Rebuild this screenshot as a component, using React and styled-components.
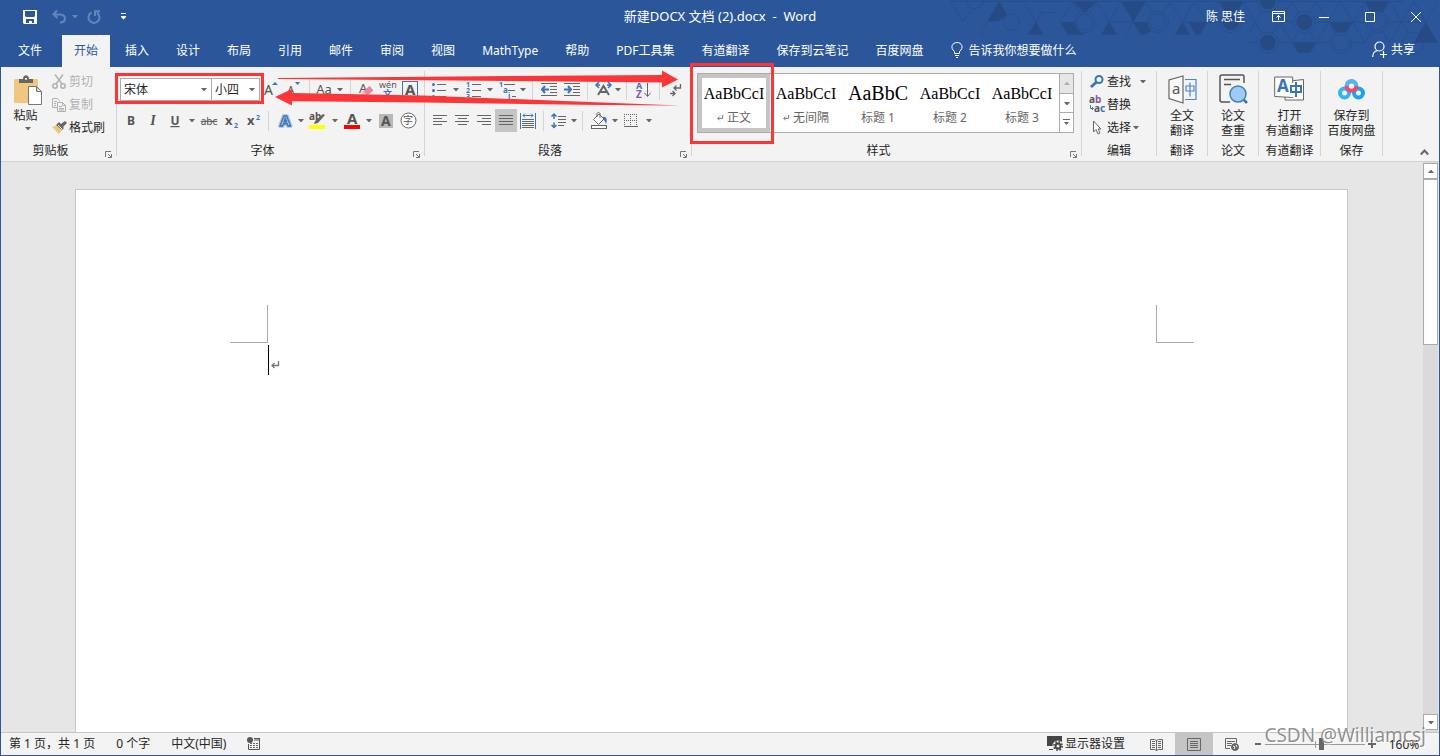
import styled, { createGlobalStyle, css } from 'styled-components';

const BLUE = '#2b579a';
const RED = '#fb3638';
const INK = '#666';
const ACCENT = '#3a76b5';

const GlobalStyle = createGlobalStyle`
  * {
    box-sizing: border-box;
  }

  body {
    margin: 0;
    font-family: 'Noto Sans', 'Noto Sans CJK SC', sans-serif;
    font-size: 12px;
    line-height: 15px;
    color: #262626;
  }

  button,
  input,
  select {
    font: inherit;
    color: inherit;
  }

  button {
    display: flex;
    align-items: center;
    padding: 0;
    border: 0;
    background: none;
  }

  svg {
    display: block;
    flex: none;
    overflow: visible;
  }
`;

/* ---------- window ---------- */

const Window = styled.div`
  display: flex;
  flex-direction: column;
  height: 100vh;
  overflow: hidden;
  border: 1px solid ${BLUE};
  border-top: 0;
`;

const Header = styled.header`
  position: relative;
  flex: none;
  background: ${BLUE};
  color: #fff;
`;

const HeaderArt = styled.svg`
  position: absolute;
  top: 0;
  right: 0;
  overflow: hidden;
`;

const TitleBar = styled.div`
  position: relative;
  display: grid;
  grid-template-columns: 1fr auto 1fr;
  align-items: center;
  height: 35px;
  padding-bottom: 2px;
`;

const DocumentTitle = styled.span`
  font-size: 13px;
`;

const QuickAccess = styled.div`
  display: flex;
  gap: 4px;
  padding-left: 17px;
`;

const SplitTool = styled.div`
  display: flex;
`;

const TitleButton = styled.button`
  justify-content: center;
  width: ${({ $w }) => $w || 24}px;
  height: 32px;
`;

const WindowControls = styled.div`
  display: flex;
  align-items: center;
  justify-content: flex-end;
`;

const UserName = styled.span`
  margin-right: 10px;
`;

const TabBar = styled.nav`
  position: relative;
  display: flex;
  gap: 3px;
  height: 32px;
`;

const Tab = styled.button`
  justify-content: center;
  min-width: ${({ $file }) => ($file ? 58 : 48)}px;
  padding: 0 12px 2px;
  white-space: nowrap;
  ${({ $active }) =>
    $active &&
    css`
      background: #f3f3f3;
      color: ${BLUE};
    `}
`;

const TellMe = styled.button`
  gap: 6px;
  padding: 0 0 2px 12px;
  white-space: nowrap;
`;

const Share = styled.button`
  gap: 4px;
  margin-left: auto;
  padding: 0 24px 4px 0;
`;

/* ---------- ribbon ---------- */

const Ribbon = styled.div`
  position: relative;
  display: flex;
  flex: none;
  height: 95px;
  border-bottom: 1px solid #d2d2d2;
  background: #f3f3f3;
`;

const Group = styled.section`
  display: flex;
  flex-direction: column;
  min-width: ${({ $w }) => $w}px;
`;

const GroupBody = styled.div`
  display: flex;
  flex: none;
  height: 75px;
`;

const GroupFooter = styled.div`
  position: relative;
  height: 18px;
  line-height: 18px;
  text-align: center;
  padding-right: ${({ $launch }) => ($launch ? 16 : 0)}px;
`;

const Launcher = styled.button`
  position: absolute;
  right: 4px;
  bottom: 2px;
`;

const Divider = styled.div`
  width: 1px;
  margin: 4px 0 5px;
  background: #d4d4d4;
`;

const PasteButton = styled.button`
  flex-direction: column;
  width: 50px;
  padding: 8px 0 0 3px;
`;

const PasteLabel = styled.span`
  margin: 2px 0 4px -4px;
`;

const SmallList = styled.div`
  display: flex;
  flex-direction: column;
  padding: 3px 0 0 ${({ $left }) => $left || 0}px;
`;

const SmallButton = styled.button`
  gap: 2px;
  height: 23px;
  color: ${({ disabled }) => (disabled ? '#b1b1b1' : 'inherit')};
  white-space: nowrap;
`;

const IconSlot = styled.span`
  display: flex;
  justify-content: center;
  width: 16px;
`;

const Rows = styled.div`
  display: flex;
  flex-direction: column;
  gap: 8px;
  padding-top: 11px;
`;

const Row = styled.div`
  display: flex;
  align-items: center;
  height: 23px;
  padding-left: ${({ $left }) => $left || 3}px;
`;

const Tool = styled.button`
  justify-content: center;
  width: ${({ $w }) => $w || 22}px;
  height: 23px;
  background: ${({ $on }) => ($on ? '#c5c5c5' : 'none')};
`;

const RowDivider = styled.span`
  width: 1px;
  height: 20px;
  margin: 0 4px;
  background: #d4d4d4;
`;

const Highlight = styled.div`
  position: relative;
  display: flex;

  &::after {
    content: '';
    position: absolute;
    z-index: 3;
    inset: ${({ $inset }) => $inset};
    border: 3px solid ${RED};
    pointer-events: none;
  }
`;

const Combo = styled.label`
  display: flex;
  align-items: center;
  width: ${({ $w }) => $w}px;
  height: 23px;
  margin-right: -1px;
  padding-right: 4px;
  border: 1px solid #ababab;
  background: #fff;

  select {
    appearance: none;
    flex: 1;
    min-width: 0;
    padding: 0 0 0 3px;
    border: 0;
    background: none;
    outline: 0;
  }
`;

const Gallery = styled.div`
  display: flex;
  width: 377px;
  height: 60px;
  margin: 6px 7px 0 5px;
  border: 1px solid #ababab;
  background: #fff;
`;

const StyleCell = styled.button`
  flex-direction: column;
  width: 72px;
  height: 58px;
  border: 4px solid ${({ $on }) => ($on ? '#c5c5c5' : 'transparent')};
`;

const Sample = styled.span`
  height: 27px;
  padding-top: ${({ $large }) => ($large ? 5 : 6)}px;
  font-family: 'Liberation Serif', serif;
  font-size: ${({ $large }) => ($large ? 20 : 16)}px;
  line-height: 20px;
  color: #000;
`;

const StyleName = styled.span`
  display: flex;
  align-items: center;
  gap: 4px;
  margin-top: 5px;
  color: #666;
  white-space: nowrap;
`;

const GalleryNav = styled.div`
  display: flex;
  flex-direction: column;
  flex: 1;
  margin-left: 1px;
  border-left: 1px solid #ababab;
`;

const GalleryButton = styled.button`
  flex: 1;
  justify-content: center;
  background: ${({ disabled }) => (disabled ? '#e6e6e6' : '#fff')};

  & + & {
    border-top: 1px solid #ababab;
  }
`;

const LargeButton = styled.button`
  flex: 1;
  flex-direction: column;
  padding-top: 6px;
  white-space: nowrap;
`;

const LargeIcon = styled.span`
  display: flex;
  align-items: center;
  height: 35px;
  padding-bottom: 3px;
`;

const Collapse = styled.button`
  align-self: flex-end;
  margin: 0 10px 5px auto;
`;

const Arrows = styled.svg`
  position: absolute;
  z-index: 2;
  top: 0;
  left: 273px;
  pointer-events: none;
`;

/* ---------- document ---------- */

const Workspace = styled.main`
  display: flex;
  flex: 1;
  min-height: 0;
  padding-right: 1px;
  background: #e6e6e6;
`;

const Canvas = styled.div`
  display: flex;
  flex: 1;
  justify-content: center;
  padding: 27px 1px 0 0;
`;

const Page = styled.article`
  width: 100%;
  max-width: 1273px;
  padding: 115px 153px 0 154px;
  border: 1px solid #c6c6c6;
  border-bottom: 0;
  background: #fff;
`;

const MarginMarks = styled.div`
  display: flex;
  justify-content: space-between;
`;

const MarginMark = styled.span`
  width: 38px;
  height: 38px;
  border-bottom: 1px solid #ababab;
  border-${({ $side }) => $side}: 1px solid #ababab;
`;

const TextLine = styled.div`
  display: flex;
  align-items: flex-end;
  gap: 2px;
  height: 30px;
  margin: 2px 38px 0;
`;

const TextCursor = styled.span`
  width: 1px;
  height: 30px;
  background: #000;
`;

const ParagraphEnd = styled.span`
  padding-bottom: 6px;
`;

const ScrollBar = styled.div`
  display: flex;
  flex-direction: column;
  width: 15px;
  padding: 1px 0 2px;
  background: #dadada;
`;

const ScrollButton = styled.button`
  justify-content: center;
  height: 16px;
  border: 1px solid #ababab;
  background: #fff;
`;

const ScrollTrack = styled.div`
  flex: 1;
`;

const ScrollThumb = styled.div`
  height: 31%;
  border: 1px solid #ababab;
  background: #fff;
`;

/* ---------- status bar ---------- */

const StatusBar = styled.footer`
  position: relative;
  display: flex;
  align-items: center;
  justify-content: space-between;
  flex: none;
  height: 23px;
  border-top: 1px solid #c6c6c6;
  background: #f3f3f3;
  white-space: nowrap;
`;

const StatusLeft = styled.div`
  display: flex;
  align-items: center;
  gap: 21px;
  padding: 0 0 2px 8px;
`;

const StatusRight = styled.div`
  display: flex;
  align-items: center;
  height: 22px;
`;

const DisplaySettings = styled.button`
  gap: 2px;
  padding: 0 12px 2px 0;
`;

const ViewButton = styled.button`
  justify-content: center;
  width: 38px;
  height: 22px;
  background: ${({ $on }) => ($on ? '#c5c5c5' : 'none')};
`;

const ZoomStep = styled.button`
  justify-content: center;
  width: 14px;
  height: 22px;
`;

const ZoomSlider = styled.input`
  appearance: none;
  width: 100px;
  height: 13px;
  margin: 0;
  background:
    linear-gradient(#999, #999) 50% 50% / 1px 7px no-repeat,
    linear-gradient(#999, #999) 0 50% / 100% 1px no-repeat;

  &::-webkit-slider-thumb {
    appearance: none;
    width: 5px;
    height: 12px;
    background: #666;
  }
`;

const ZoomValue = styled.button`
  justify-content: center;
  width: 60px;
  padding-right: 10px;
`;

const Watermark = styled.span`
  position: absolute;
  right: 13px;
  bottom: 8px;
  font-size: 19px;
  line-height: 24px;
  color: rgba(110, 110, 110, 0.75);
  text-shadow: 1px 1px 0 #fff;
  pointer-events: none;
`;

/* ---------- drawings ---------- */

const Svg = ({ w, h, children, ...rest }) => (
  <svg
    width={w}
    height={h}
    viewBox={`0 0 ${w} ${h}`}
    fill="none"
    stroke={INK}
    aria-hidden="true"
    {...rest}
  >
    {children}
  </svg>
);

const Triangle = ({ up, fill = INK }) => (
  <Svg w={6} h={3} stroke="none" fill={fill}>
    <path d={up ? 'M0 3h6L3.500 0h-1z' : 'M0 0h6L3.500 3h-1z'} />
  </Svg>
);

const Caret = ({ label, w = 12 }) => (
  <Tool $w={w} aria-label={label}>
    <Triangle />
  </Tool>
);

const Glyph = ({ x, y, size, fill = '#555', children, ...rest }) => (
  <text x={x} y={y} fontSize={size} fill={fill} stroke="none" {...rest}>
    {children}
  </text>
);

const ringCentres = [
  [687, 66], [905, 66], [1016, 4], [1126, 66], [1016, 128], [1235, 128], [1345, 66],
];

const HeaderPattern = () => (
  <HeaderArt width="510" height="68" viewBox="0 0 1530 204" aria-hidden="true">
    <g fill="#264a84">
      <path d="M211 4L234 44L210 62L175 66z" />
      <path d="M321 66L343 104H297z" />
      <path d="M431 4h73l-37 34z" />
      <path d="M394 66h42l12 24l18 14h-48z" />
      <path d="M577 4h73l-37 62z" />
      <path d="M540 66l23 38h-46z" />
      <path d="M613 66h42l12 26l-20 12h-12z" />
      <path d="M760 66l22 38h-44z" />
      <path d="M780 66h53l-20 38h-14z" />
      <path d="M870 4h73l-20 32h-34z" />
      <path d="M1199 66h73l-24 32h-26z" />
      <path d="M1089 128h73l-18 30h-36z" />
      <path d="M1308 4h73l-20 32h-34z" />
      <path d="M1491 66l36 62h-73z" />
    </g>
    <g fill="none" stroke="#264f8d" strokeWidth="3">
      <path d="M65 4H1425M540 66h73M760 66h113M1052 66h42M1158 66h155M1377 66h114M960 128h240M1267 128h40" />
      <path d="M65 4L102 66L124 32M211 4L155 98l4 6h12M211 4l23 40M284 4l37 62M297 104l24 -38l20 -34M325 32l14 6h38l14 -10M394 66l37 -62M394 66l24 38M431 4l20 34M504 4l-20 34M504 4l36 62M563 104l-23 -38M517 104l23 -38l37 -62M577 4l36 62l-20 38M613 66l37 -62l22 36M635 104l-22 -38M723 4l-20 34M723 4l37 62M796 4l-58 100M760 66l22 38M796 4l37 62l-20 38M833 66l37 -62l20 34M943 4l-20 34M943 4l35 62l-18 34" />
      <path d="M978 66l22 -34M1030 32l22 34M1089 4l-37 62M1089 4l20 34M1162 4l-20 34M1162 4l37 62M1235 4l-36 62M1235 4l37 62M1308 4l-36 62M1308 4l20 34M1381 4l-20 34M1381 4l37 62M1454 4l-36 62M1454 4l37 62M1527 4l-36 62" />
      <path d="M978 66l22 34M1030 98l22 -32l37 62M1089 128l20 -34M1142 94l20 34l37 -62l20 34M1251 98l21 -32l36 62l20 -34M1361 94l20 34l37 -62l20 34M1470 98l21 -32" />
      <path d="M1089 128l19 30h36l18 -30" />
      <circle cx="138" cy="2" r="24" />
      <circle cx="248" cy="66" r="24" />
      <circle cx="467" cy="66" r="24" />
      <circle cx="467" cy="66" r="32" />
      <circle cx="1454" cy="128" r="32" />
      {ringCentres.map(([cx, cy]) => (
        <circle key={`${cx}-${cy}`} cx={cx} cy={cy} r="32" fill={BLUE} />
      ))}
      <circle cx="687" cy="66" r="24" />
      <circle cx="1235" cy="128" r="24" />
      <circle cx="1345" cy="66" r="24" />
    </g>
    <g fill="#264a84">
      <circle cx="905" cy="66" r="24" />
      <circle cx="1016" cy="4" r="24" />
      <circle cx="1126" cy="66" r="24" />
      <circle cx="1016" cy="128" r="24" />
    </g>
  </HeaderArt>
);

const SaveIcon = () => (
  <Svg w={14} h={14} stroke="none" fill="#fff">
    <path
      fillRule="evenodd"
      d="M0 0h14v14H1l-1-1zM2 1h10v5l-1 1H3L2 6zM3 9h8v4H9v-2H6v2H3z"
    />
  </Svg>
);

const UndoIcon = () => (
  <Svg w={14} h={14} stroke="#6485ba" strokeWidth="2">
    <path d="M5 .5L1.500 4.500L5.500 8M2 4.500h6.500c6 0 6 8-.5 8" />
  </Svg>
);

const RedoIcon = () => (
  <Svg w={14} h={14} stroke="#6485ba" strokeWidth="2">
    <path d="M4.500 2.500A5.500 5.500 0 1 0 10 2.800M8 6V1.200h5" />
  </Svg>
);

const CustomizeIcon = () => (
  <Svg w={7} h={7} stroke="none" fill="#fff">
    <path d="M1 0h5v1H1zM1 3h5v1L3.500 6.500L1 4z" />
  </Svg>
);

const BulbIcon = () => (
  <Svg w={12} h={17} stroke="#fff">
    <path d="M3.500 11.500V9.500C-1.500 5.500 1.500.5 6 .5s7.500 5 2.500 9v2zM4 13.500h4M5 15.500h2" />
  </Svg>
);

const ShareIcon = () => (
  <Svg w={15} h={17} stroke="#fff" strokeWidth="1.200">
    <circle cx="7.500" cy="5.500" r="4.500" />
    <path d="M.7 16c0-4 2-6 5-6.500M8 13.500h7M11.500 10v7" />
  </Svg>
);

const ScissorsIcon = () => (
  <Svg w={14} h={15} stroke="#b1b1b1" strokeWidth="1.500">
    <path d="M3 .5L10 10M11 .5L4 10" />
    <circle cx="3" cy="12" r="2.200" />
    <circle cx="11" cy="12" r="2.200" />
  </Svg>
);

const CopyIcon = () => (
  <Svg w={14} h={14} stroke="#b1b1b1">
    <path d="M5.500 9.500h-5v-9h5l2 2v1M2 3.500h3M2 5.500h2M2 7.500h2" />
    <path fill="#f3f3f3" d="M5.500 4.500h5l3 3v6h-8zM10.500 4.500v3h3M7 8.500h3M7 10.500h5M7 12h5" />
  </Svg>
);

const BrushIcon = () => (
  <Svg w={15} h={13} stroke="none">
    <path fill="#f0c67a" d="M0 6l5-2l5 5l-3 4z" />
    <path fill="#666" d="M4 4l3-3l2 2l4-3l2 2l-4 4l1 1l-2 2z" />
    <path stroke="#f3f3f3" d="M6 4l4 4" />
  </Svg>
);

const ClipboardIcon = () => (
  <Svg w={28} h={31} stroke="none">
    <rect y="4" width="24" height="24" rx="1" fill="#efc77f" />
    <path fill="#666" d="M5 8V4h4c0-5 6-5 6 0h4v4zM11 3v2h2V3z" fillRule="evenodd" />
    <path fill="#fff" stroke="#777" d="M14.500 11.500h8l5 5v13h-13zM22.500 11.500v5h5" />
  </Svg>
);

const LaunchIcon = () => (
  <Svg w={7} h={7} stroke="#777">
    <path d="M.5 6V.5H6M3 3l3 3M6.500 3v3.500H3" />
  </Svg>
);

const SizeIcon = ({ up }) => (
  <Svg w={14} h={18} stroke="none">
    <Glyph x={0} y={14} size={up ? 14 : 12}>A</Glyph>
    <path fill={ACCENT} d={up ? 'M8 4h6l-3-3z' : 'M8 1h5l-2.500 3z'} />
  </Svg>
);

const EraserIcon = () => (
  <Svg w={16} h={18}>
    <Glyph x={1} y={12} size={13}>A</Glyph>
    <g transform="rotate(-40 9 11)" stroke="none">
      <rect x="4" y="8" width="11" height="6" rx="1" fill="#e98998" />
      <rect x="4" y="8" width="3" height="6" rx="1" fill="#f4c0c8" />
    </g>
  </Svg>
);

const PhoneticIcon = () => (
  <Svg w={18} h={19}>
    <Glyph x={0} y={8} size={9}>wén</Glyph>
    <Glyph x={4} y={17} size={9} fill={ACCENT} fontWeight="bold">文</Glyph>
  </Svg>
);

const BoxedAIcon = () => (
  <Svg w={16} h={17} stroke={ACCENT}>
    <rect x=".5" y=".5" width="15" height="16" />
    <Glyph x={3} y={14} size={15} fontWeight="bold">A</Glyph>
  </Svg>
);

const ShadedAIcon = () => (
  <Svg w={14} h={14}>
    <rect width="14" height="14" fill="#b8b8b8" stroke="none" />
    <Glyph x={2} y={12} size={14} fontWeight="bold">A</Glyph>
  </Svg>
);

const CircledIcon = () => (
  <Svg w={17} h={17}>
    <circle cx="8.500" cy="8.500" r="7.500" fill="#fff" />
    <Glyph x={3} y={12} size={10}>字</Glyph>
  </Svg>
);

const LetterIcon = ({ children, ...rest }) => (
  <Svg w={18} h={18}>
    <Glyph x={9} y={13} size={12} textAnchor="middle" {...rest}>
      {children}
    </Glyph>
  </Svg>
);

const ScriptIcon = ({ up }) => (
  <Svg w={14} h={18}>
    <Glyph x={0} y={13} size={13} fontWeight="bold">x</Glyph>
    <Glyph x={9} y={up ? 8 : 16} size={7} fill={ACCENT} fontWeight="bold">2</Glyph>
  </Svg>
);

const EffectsIcon = () => (
  <Svg w={14} h={18}>
    <text x="2" y="14" fontSize="15" fontWeight="bold" stroke="#b4cce8" strokeWidth="4" strokeLinejoin="round" fill="none">A</text>
    <text x="2" y="14" fontSize="15" fontWeight="bold" stroke={ACCENT} strokeWidth="1.500" fill="#fff">A</text>
  </Svg>
);

const MarkerIcon = () => (
  <Svg w={17} h={18} stroke="none">
    <Glyph x={0} y={8} size={10} fontWeight="bold">ab</Glyph>
    <path fill="#666" d="M14 2l2 1l-7 8l-4 1l1-3z" />
    <rect y="13" width="16" height="4" fill="#ffff00" />
  </Svg>
);

const FontColorIcon = () => (
  <Svg w={16} h={18} stroke="none">
    <Glyph x={3} y={12} size={15} fontWeight="bold">A</Glyph>
    <rect y="13" width="16" height="4" fill="#ff0000" />
  </Svg>
);

const BulletsIcon = () => (
  <Svg w={14} h={16}>
    <path d="M5 2.500h9M5 8.500h9M5 14.500h9" />
    <g fill={ACCENT} stroke="none">
      <circle cx="1.500" cy="2.500" r="1.500" />
      <circle cx="1.500" cy="8.500" r="1.500" />
      <circle cx="1.500" cy="14.500" r="1.500" />
    </g>
  </Svg>
);

const NumbersIcon = () => (
  <Svg w={15} h={18}>
    <path d="M6 3.500h9M6 9.500h9M6 15.500h9" />
    <Glyph x={0} y={6} size={7} fill={ACCENT} fontWeight="bold">1</Glyph>
    <Glyph x={0} y={12} size={7} fill={ACCENT} fontWeight="bold">2</Glyph>
    <Glyph x={0} y={18} size={7} fill={ACCENT} fontWeight="bold">3</Glyph>
  </Svg>
);

const MultiLevelIcon = () => (
  <Svg w={17} h={18}>
    <path d="M5 3.500h11M9 9.500h7M13 15.500h4" />
    <Glyph x={0} y={6} size={7} fill={ACCENT} fontWeight="bold">1</Glyph>
    <Glyph x={4} y={12} size={8} fill={ACCENT} fontWeight="bold">a</Glyph>
    <Glyph x={9} y={18} size={8} fill={ACCENT} fontWeight="bold">i</Glyph>
  </Svg>
);

const IndentIcon = ({ out }) => (
  <Svg w={16} h={13}>
    <path d="M0 .5h16M9 3.500h7M9 6.500h7M9 9.500h7M0 12.500h16" />
    <path stroke={ACCENT} strokeWidth="2" d={out ? 'M8 6.500H1M4 3L1 6.500L4 10' : 'M0 6.500h7M4 3l3 3.500L4 10'} />
  </Svg>
);

const AsianLayoutIcon = () => (
  <Svg w={17} h={17} strokeWidth="2">
    <path d="M3 14L8.500 5L14 14M5 11h7" />
    <path stroke={ACCENT} strokeWidth="1.500" d="M4 1L1 4l3 3M1 4h4M13 1l3 3l-3 3M16 4h-4" />
  </Svg>
);

const SortIcon = () => (
  <Svg w={15} h={18}>
    <Glyph x={0} y={8} size={9} fill={ACCENT} fontWeight="bold">A</Glyph>
    <Glyph x={0} y={17} size={10} fill="#8a56b0" fontWeight="bold">Z</Glyph>
    <path d="M11.500 2v13M8.500 12l3 3.500l3-3.500" />
  </Svg>
);

const MarksIcon = () => (
  <Svg w={12} h={14} strokeWidth="1.300">
    <path d="M10.500 1v4H4M6.500 2.500L4 5l2.500 2.500M0 10.500h5M2.500 8L5 10.500L2.500 13" />
  </Svg>
);

const alignPaths = {
  left: 'M0 .5h14M0 3.500h9M0 6.500h14M0 9.500h9',
  center: 'M0 .5h14M3 3.500h9M0 6.500h14M3 9.500h9',
  right: 'M0 .5h14M5 3.500h9M0 6.500h14M5 9.500h9',
  justify: 'M0 .5h14M0 3.500h14M0 6.500h14M0 9.500h14',
};

const AlignIcon = ({ kind }) => (
  <Svg w={14} h={11}>
    <path d={alignPaths[kind]} />
  </Svg>
);

const DistributeIcon = () => (
  <Svg w={16} h={16}>
    <path d="M2 6.500h12M2 8.500h12M2 10.500h12M2 12.500h12M2 14.500h12" />
    <path stroke={ACCENT} d="M.5 0v16M15.500 0v16M3 2.500h10M5 .5l-2 2l2 2M11 .5l2 2l-2 2" />
  </Svg>
);

const SpacingIcon = () => (
  <Svg w={16} h={16}>
    <path d="M7 3.500h8M7 6.500h8M7 9.500h8M7 12.500h6" />
    <path stroke={ACCENT} strokeWidth="1.500" d="M3 1v5M.5 3.500L3 1l2.500 2.500M3 9.500v5M.5 12L3 14.500L5.500 12" />
  </Svg>
);

const BucketIcon = () => (
  <Svg w={17} h={17}>
    <path fill="#fff" d="M2.500 7.500L8 2l5 5l-5.500 5.500zM6 5V2c0-2 3-2 3 0v4" />
    <path fill={ACCENT} stroke="none" d="M12 5c3-1 5 2 3 7c-1-3-2-4-3-5z" />
    <rect x=".5" y="13.500" width="15" height="3" fill="#fff" />
  </Svg>
);

const BordersIcon = () => (
  <Svg w={14} h={14}>
    <path strokeDasharray="1 1" d="M0 .5h13M0 6.500h13M.5 0v12M6.500 0v12M12.500 0v12" />
    <path d="M0 12.500h14" />
  </Svg>
);

const ReturnIcon = ({ size = 6 }) => (
  <svg width={size} height={size} viewBox="0 0 8 8" fill="none" stroke="#777" aria-hidden="true">
    <path d="M7.500 0v4.500H1M3.500 2L1 4.500L3.500 7" strokeWidth="1.300" />
  </svg>
);

const FindIcon = () => (
  <Svg w={14} h={13} stroke={ACCENT} strokeWidth="2">
    <circle cx="9" cy="4.500" r="3.500" />
    <path d="M6.500 7L1 12" strokeWidth="3" />
  </Svg>
);

const ReplaceIcon = () => (
  <Svg w={16} h={17}>
    <Glyph x={0} y={7} size={10} fontWeight="bold">
      a<tspan fill="#8a56b0">b</tspan>
    </Glyph>
    <path stroke={ACCENT} d="M1.500 9v3.500H4M3 11l1.500 1.500L3 14" />
    <Glyph x={5} y={16} size={10} fontWeight="bold">
      a<tspan fill={ACCENT}>c</tspan>
    </Glyph>
  </Svg>
);

const PointerIcon = () => (
  <Svg w={10} h={15}>
    <path fill="#fff" d="M1.500 1v11L4 9.500l2 4.500l2-1l-2-4h3z" />
  </Svg>
);

const TranslateIcon = () => (
  <Svg w={29} h={29}>
    <path fill="#fafafa" strokeWidth="1.200" d="M15 1v27L1 23.500V5z" />
    <Glyph x={4} y={19} size={15} fill="#555">a</Glyph>
    <path stroke="#4a86d8" strokeWidth="1.200" d="M17 4.500h11v20H17M18 11h8v5h-8zM22 7.500v14" />
  </Svg>
);

const PaperIcon = () => (
  <Svg w={29} h={30}>
    <path stroke="#555" strokeWidth="1.500" d="M25 9V2.500c0-1-1-1.500-1.500-1.500H3C2 1 1 2 1 3v23c0 1 1 2 2 2h8M5 5.500h16M5 10.500h7" />
    <path stroke="#3a76a8" strokeWidth="2.500" d="M24 25l4 4" />
    <circle cx="19" cy="20" r="8" fill="#9ccbf8" stroke="#3f7fb5" strokeWidth="1.500" />
  </Svg>
);

const YoudaoIcon = () => (
  <Svg w={31} h={26}>
    <path fill="#fff" d="M12 5.500l17.500-2v20.500H11z" />
    <path fill="#fff" d="M.7 1h18v20.500l-18-1z" />
    <Glyph x={3} y={16} size={17} fill={ACCENT} fontWeight="bold">A</Glyph>
    <path fill="#fff" stroke="none" d="M16 7h13v14H16z" />
    <path stroke={ACCENT} strokeWidth="2" d="M17 10h10v6H17zM22 6v15" />
  </Svg>
);

const NetdiskIcon = () => (
  <Svg w={27} h={21} strokeWidth="4">
    <circle cx="6.500" cy="14" r="4.500" stroke="#35b4f3" />
    <circle cx="20.500" cy="14" r="4.500" stroke="#1ba1f7" />
    <circle cx="13.500" cy="7" r="4.800" stroke="#f2486b" />
    <path stroke="#45bdf4" d="M8.700 7a4.800 4.800 0 0 1 9.600 0" />
  </Svg>
);

const ChevronIcon = () => (
  <Svg w={9} h={7} strokeWidth="2">
    <path d="M.8 5.500L4.500 1.500l3.700 4" />
  </Svg>
);

const ProofIcon = () => (
  <Svg w={13} h={13}>
    <circle cx="3" cy="3" r="3" fill="#555" stroke="none" />
    <path stroke="#555" d="M7 1.500h6M1.500 7v5.500h11V1M7 3h6" />
    <path strokeDasharray="2 1" d="M3 6.500h8M3 8.500h8M3 10.500h8" />
  </Svg>
);

const MonitorIcon = () => (
  <Svg w={16} h={16} stroke="none">
    <path fill="#444" d="M0 1h15v10H0zM2 14h4v1H2z" />
    <circle cx="11" cy="11" r="5.500" fill="#f3f3f3" />
    <circle cx="11" cy="11" r="2.500" stroke="#444" strokeWidth="2" />
    <circle cx="11" cy="11" r="4.200" stroke="#444" strokeWidth="1.500" strokeDasharray="1.700 1.600" />
  </Svg>
);

const ReadIcon = () => (
  <Svg w={13} h={13}>
    <path d="M6.500 2v10.500M.5 1.500l4 0l2 1l2-1h4v10h-4l-2 1l-2-1h-4zM2 3.500h3M2 5.500h3M2 7.500h3M2 9.500h3M8 3.500h3M8 5.500h3M8 7.500h3M8 9.500h3" />
  </Svg>
);

const PrintIcon = () => (
  <Svg w={14} h={13}>
    <path d="M.5.5h13v12H.5zM3 3.500h8M3 5.500h8M3 7.500h8M3 9.500h8" />
  </Svg>
);

const WebIcon = () => (
  <Svg w={14} h={13}>
    <path d="M5 10.500H.5V.5h11V5M2 3.500h8M2 5.500h5M2 7.500h4" />
    <circle cx="10" cy="9" r="3.500" fill={INK} />
    <path stroke="#f3f3f3" d="M8 8l2 1l-1 2M11 7l1 2" />
  </Svg>
);

/* ---------- sections ---------- */

const tabs = [
  '文件', '开始', '插入', '设计', '布局', '引用', '邮件', '审阅', '视图',
  'MathType', '帮助', 'PDF工具集', '有道翻译', '保存到云笔记', '百度网盘',
];

const styles = [
  { name: '正文', sample: 'AaBbCcI', mark: true },
  { name: '无间隔', sample: 'AaBbCcI', mark: true },
  { name: '标题 1', sample: 'AaBbC', large: true },
  { name: '标题 2', sample: 'AaBbCcI' },
  { name: '标题 3', sample: 'AaBbCcI' },
];

const addIns = [
  { lines: ['全文', '翻译'], group: '翻译', icon: <TranslateIcon />, w: 50 },
  { lines: ['论文', '查重'], group: '论文', icon: <PaperIcon />, w: 50 },
  { lines: ['打开', '有道翻译'], group: '有道翻译', icon: <YoudaoIcon />, w: 61 },
  { lines: ['保存到', '百度网盘'], group: '保存', icon: <NetdiskIcon />, w: 61 },
];

const RibbonGroup = ({ title, w, launch, children }) => (
  <>
    <Group $w={w} aria-label={title}>
      <GroupBody>{children}</GroupBody>
      <GroupFooter $launch={launch}>
        {title}
        {launch && (
          <Launcher aria-label={`${title}设置`}>
            <LaunchIcon />
          </Launcher>
        )}
      </GroupFooter>
    </Group>
    <Divider />
  </>
);

const AppHeader = () => (
  <Header>
    <HeaderPattern />
    <TitleBar>
      <QuickAccess>
        <TitleButton aria-label="保存"><SaveIcon /></TitleButton>
        <SplitTool>
          <TitleButton $w={26} aria-label="撤消"><UndoIcon /></TitleButton>
          <TitleButton $w={6} aria-label="撤消列表"><Triangle fill="#6485ba" /></TitleButton>
        </SplitTool>
        <TitleButton aria-label="重复"><RedoIcon /></TitleButton>
        <TitleButton $w={26} aria-label="自定义快速访问工具栏"><CustomizeIcon /></TitleButton>
      </QuickAccess>
      <DocumentTitle>新建DOCX 文档 (2).docx &nbsp;-&nbsp; Word</DocumentTitle>
      <WindowControls>
        <UserName>陈 思佳</UserName>
        <TitleButton $w={46} aria-label="功能区显示选项">
          <Svg w={13} h={11} stroke="#fff">
            <path d="M.5.5h12v10H.5zM0 2.500h13M6.500 9V4.500M4.500 6.500l2-2l2 2" />
          </Svg>
        </TitleButton>
        <TitleButton $w={46} aria-label="最小化">
          <Svg w={10} h={10} stroke="#fff"><path d="M0 5.500h10" /></Svg>
        </TitleButton>
        <TitleButton $w={46} aria-label="最大化">
          <Svg w={10} h={10} stroke="#fff"><path d="M.5.5h9v9h-9z" /></Svg>
        </TitleButton>
        <TitleButton $w={46} aria-label="关闭">
          <Svg w={10} h={10} stroke="#fff"><path d="M0 0l10 10M10 0L0 10" /></Svg>
        </TitleButton>
      </WindowControls>
    </TitleBar>
    <TabBar>
      {tabs.map((tab, i) => (
        <Tab key={tab} $file={i === 0} $active={i === 1}>{tab}</Tab>
      ))}
      <TellMe><BulbIcon />告诉我你想要做什么</TellMe>
      <Share><ShareIcon />共享</Share>
    </TabBar>
  </Header>
);

const ClipboardGroup = () => (
  <RibbonGroup title="剪贴板" w={115} launch>
    <PasteButton>
      <ClipboardIcon />
      <PasteLabel>粘贴</PasteLabel>
      <Triangle />
    </PasteButton>
    <SmallList>
      <SmallButton disabled><IconSlot><ScissorsIcon /></IconSlot>剪切</SmallButton>
      <SmallButton disabled><IconSlot><CopyIcon /></IconSlot>复制</SmallButton>
      <SmallButton><IconSlot><BrushIcon /></IconSlot>格式刷</SmallButton>
    </SmallList>
  </RibbonGroup>
);

const FontGroup = () => (
  <RibbonGroup title="字体" w={307} launch>
    <Rows>
      <Row>
        <Highlight $inset="-5px -5px -3px -5px">
          <Combo $w={92}>
            <select aria-label="字体"><option>宋体</option></select>
            <Triangle />
          </Combo>
          <Combo $w={49}>
            <select aria-label="字号"><option>小四</option></select>
            <Triangle />
          </Combo>
        </Highlight>
        <Tool $w={24} aria-label="增大字号"><SizeIcon up /></Tool>
        <Tool aria-label="减小字号"><SizeIcon /></Tool>
        <RowDivider />
        <Tool $w={20} aria-label="更改大小写"><LetterIcon size={13}>Aa</LetterIcon></Tool>
        <Caret label="更改大小写选项" />
        <RowDivider />
        <Tool aria-label="清除所有格式"><EraserIcon /></Tool>
        <Tool aria-label="拼音指南"><PhoneticIcon /></Tool>
        <Tool aria-label="字符边框"><BoxedAIcon /></Tool>
      </Row>
      <Row>
        <Tool aria-label="加粗"><LetterIcon fontWeight="bold">B</LetterIcon></Tool>
        <Tool aria-label="倾斜"><LetterIcon fontWeight="bold" fontStyle="italic" fontFamily="Liberation Serif" size={14}>I</LetterIcon></Tool>
        <Tool aria-label="下划线"><LetterIcon fontWeight="bold" textDecoration="underline">U</LetterIcon></Tool>
        <Caret label="下划线选项" />
        <Tool aria-label="删除线"><LetterIcon size={10} textDecoration="line-through">abc</LetterIcon></Tool>
        <Tool $w={24} aria-label="下标"><ScriptIcon /></Tool>
        <Tool $w={20} aria-label="上标"><ScriptIcon up /></Tool>
        <RowDivider />
        <Tool $w={24} aria-label="文本效果"><EffectsIcon /></Tool>
        <Caret w={8} label="文本效果选项" />
        <Tool $w={24} aria-label="突出显示"><MarkerIcon /></Tool>
        <Caret label="突出显示颜色" />
        <Tool aria-label="字体颜色"><FontColorIcon /></Tool>
        <Caret label="字体颜色选项" />
        <Tool aria-label="字符底纹"><ShadedAIcon /></Tool>
        <Tool aria-label="带圈字符"><CircledIcon /></Tool>
      </Row>
    </Rows>
  </RibbonGroup>
);

const ParagraphGroup = () => (
  <RibbonGroup title="段落" w={266} launch>
    <Rows>
      <Row>
        <Tool aria-label="项目符号"><BulletsIcon /></Tool>
        <Caret label="项目符号选项" />
        <Tool aria-label="编号"><NumbersIcon /></Tool>
        <Caret label="编号选项" />
        <Tool aria-label="多级列表"><MultiLevelIcon /></Tool>
        <Caret w={10} label="多级列表选项" />
        <RowDivider />
        <Tool $w={24} aria-label="减少缩进量"><IndentIcon out /></Tool>
        <Tool aria-label="增加缩进量"><IndentIcon /></Tool>
        <RowDivider />
        <Tool aria-label="中文版式"><AsianLayoutIcon /></Tool>
        <Caret w={8} label="中文版式选项" />
        <RowDivider />
        <Tool $w={24} aria-label="排序"><SortIcon /></Tool>
        <RowDivider />
        <Tool $w={24} aria-label="显示编辑标记"><MarksIcon /></Tool>
      </Row>
      <Row $left={4}>
        <Tool aria-label="左对齐"><AlignIcon kind="left" /></Tool>
        <Tool aria-label="居中"><AlignIcon kind="center" /></Tool>
        <Tool aria-label="右对齐"><AlignIcon kind="right" /></Tool>
        <Tool $on aria-label="两端对齐"><AlignIcon kind="justify" /></Tool>
        <Tool aria-label="分散对齐"><DistributeIcon /></Tool>
        <RowDivider />
        <Tool aria-label="行距"><SpacingIcon /></Tool>
        <Caret w={8} label="行距选项" />
        <RowDivider />
        <Tool $w={24} aria-label="底纹"><BucketIcon /></Tool>
        <Caret w={8} label="底纹颜色" />
        <Tool $w={24} aria-label="边框"><BordersIcon /></Tool>
        <Caret label="边框选项" />
      </Row>
    </Rows>
  </RibbonGroup>
);

const StylesGroup = () => (
  <RibbonGroup title="样式" w={389} launch>
    <Gallery>
      {styles.map((style, i) => {
        const cell = (
          <StyleCell key={style.name} $on={i === 0}>
            <Sample $large={style.large}>{style.sample}</Sample>
            <StyleName>
              {style.mark && <ReturnIcon />}
              {style.name}
            </StyleName>
          </StyleCell>
        );
        return i === 0 ? (
          <Highlight key={style.name} $inset="-11px -4px -12px -8px">{cell}</Highlight>
        ) : (
          cell
        );
      })}
      <GalleryNav>
        <GalleryButton disabled aria-label="上一行"><Triangle up fill="#b1b1b1" /></GalleryButton>
        <GalleryButton aria-label="下一行"><Triangle /></GalleryButton>
        <GalleryButton aria-label="其他样式">
          <Svg w={7} h={7} stroke="none" fill={INK}><path d="M0 0h7v1H0zM1 3h5L3.500 6z" /></Svg>
        </GalleryButton>
      </GalleryNav>
    </Gallery>
  </RibbonGroup>
);

const EditGroup = () => (
  <RibbonGroup title="编辑" w={74}>
    <SmallList $left={7}>
      <SplitTool>
        <SmallButton><IconSlot><FindIcon /></IconSlot>查找</SmallButton>
        <Caret w={24} label="查找选项" />
      </SplitTool>
      <SmallButton><IconSlot><ReplaceIcon /></IconSlot>替换</SmallButton>
      <SmallButton><IconSlot><PointerIcon /></IconSlot>选择<Triangle /></SmallButton>
    </SmallList>
  </RibbonGroup>
);

const StatusLine = () => (
  <StatusBar>
    <StatusLeft>
      <span>第 1 页，共 1 页</span>
      <span>0 个字</span>
      <span>中文(中国)</span>
      <ProofIcon />
    </StatusLeft>
    <StatusRight>
      <DisplaySettings><MonitorIcon />显示器设置</DisplaySettings>
      <ViewButton aria-label="阅读视图"><ReadIcon /></ViewButton>
      <ViewButton $on aria-label="页面视图"><PrintIcon /></ViewButton>
      <ViewButton aria-label="Web 版式视图"><WebIcon /></ViewButton>
      <ZoomStep aria-label="缩小">
        <Svg w={6} h={6} strokeWidth="2"><path d="M0 3h6" /></Svg>
      </ZoomStep>
      <ZoomSlider type="range" min="0" max="100" defaultValue="57" aria-label="缩放" />
      <ZoomStep aria-label="放大">
        <Svg w={8} h={8} strokeWidth="2"><path d="M0 4h8M4 0v8" /></Svg>
      </ZoomStep>
      <ZoomValue>160%</ZoomValue>
    </StatusRight>
    <Watermark>CSDN @Williamcsj</Watermark>
  </StatusBar>
);

const App = () => {
  return (
    <>
      <GlobalStyle />
      <Window>
        <AppHeader />
        <Ribbon>
          <ClipboardGroup />
          <FontGroup />
          <ParagraphGroup />
          <StylesGroup />
          <EditGroup />
          {addIns.map(({ lines, group, icon, w }) => (
            <RibbonGroup key={group} title={group} w={w}>
              <LargeButton>
                <LargeIcon>{icon}</LargeIcon>
                {lines.map((line) => (
                  <span key={line}>{line}</span>
                ))}
              </LargeButton>
            </RibbonGroup>
          ))}
          <Collapse aria-label="折叠功能区"><ChevronIcon /></Collapse>
          <Arrows width="408" height="42" viewBox="274 67 408 42" fill={RED} aria-hidden="true">
            <path d="M278 78L425 76.700L662 75V70.500L678 79.500L662 87.500V82.500L425 80.300L278 79z" />
            <path d="M681 105.500L640 104L423 95.500L292 93V89L275 97L292 105.500V101.300L423 102.500L600 105z" />
          </Arrows>
        </Ribbon>
        <Workspace>
          <Canvas>
            <Page>
              <MarginMarks>
                <MarginMark $side="right" />
                <MarginMark $side="left" />
              </MarginMarks>
              <TextLine>
                <TextCursor />
                <ParagraphEnd><ReturnIcon size={8} /></ParagraphEnd>
              </TextLine>
            </Page>
          </Canvas>
          <ScrollBar>
            <ScrollButton aria-label="向上滚动"><Triangle up /></ScrollButton>
            <ScrollTrack><ScrollThumb /></ScrollTrack>
            <ScrollButton aria-label="向下滚动"><Triangle /></ScrollButton>
          </ScrollBar>
        </Workspace>
        <StatusLine />
      </Window>
    </>
  );
};

export default App;
